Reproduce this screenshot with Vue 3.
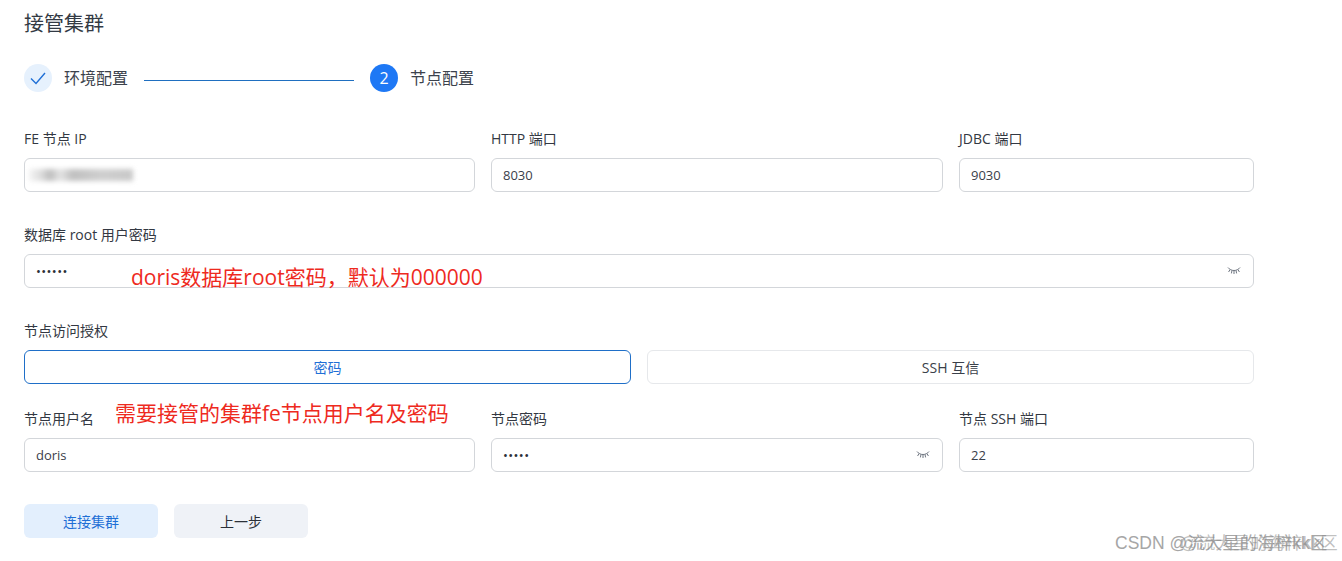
<script setup>
const topFields = [
  { label: 'FE 节点 IP', value: '', blurred: true },
  { label: 'HTTP 端口', value: '8030' },
  { label: 'JDBC 端口', value: '9030' },
];

const nodeFields = [
  { label: '节点用户名', value: 'doris' },
  { label: '节点密码', value: '•••••', secret: true },
  { label: '节点 SSH 端口', value: '22' },
];
</script>

<template>
  <div class="page">
    <h1 class="title">接管集群</h1>

    <div class="steps">
      <div class="step-icon done">
        <svg width="16" height="16" viewBox="0 0 16 16" fill="none">
          <path d="M1 8.5 L6 13.5 L15 3" stroke="#1f6fd6" stroke-width="1.4" />
        </svg>
      </div>
      <span class="step-label">环境配置</span>
      <div class="step-line"></div>
      <div class="step-icon current">2</div>
      <span class="step-label">节点配置</span>
    </div>

    <div class="row three first">
      <div v-for="f in topFields" :key="f.label" class="field">
        <label>{{ f.label }}</label>
        <div class="input">
          <div v-if="f.blurred" class="blur"></div>
          <span v-else>{{ f.value }}</span>
        </div>
      </div>
    </div>

    <div class="field block">
      <label>数据库 root 用户密码</label>
      <div class="input">
        <span class="dots">••••••</span>
        <svg class="eye" width="14" height="9" viewBox="0 0 14 9" fill="none">
          <path d="M1 1.5 C4 5.5 10 5.5 13 1.5 M3 3.6 L1.6 6 M7 4.6 V8 M11 3.6 L12.4 6 M5 4.4 L4.4 7.4 M9 4.4 L9.6 7.4" stroke="#6f7681" stroke-width="1" />
        </svg>
      </div>
    </div>

    <div class="block">
      <label class="auth-label">节点访问授权</label>
      <div class="segment">
        <div class="seg active">密码</div>
        <div class="seg">SSH 互信</div>
      </div>
    </div>

    <div class="row three node">
      <div v-for="f in nodeFields" :key="f.label" class="field">
        <label>{{ f.label }}</label>
        <div class="input">
          <span :class="{ dots: f.secret }">{{ f.value }}</span>
          <svg v-if="f.secret" class="eye" width="14" height="9" viewBox="0 0 14 9" fill="none">
            <path d="M1 1.5 C4 5.5 10 5.5 13 1.5 M3 3.6 L1.6 6 M7 4.6 V8 M11 3.6 L12.4 6 M5 4.4 L4.4 7.4 M9 4.4 L9.6 7.4" stroke="#6f7681" stroke-width="1" />
          </svg>
        </div>
      </div>
    </div>

    <div class="actions">
      <button class="btn primary">连接集群</button>
      <button class="btn">上一步</button>
    </div>

    <!-- annotations pasted on the screenshot -->
    <div class="note note-root">doris数据库root密码，默认为000000</div>
    <div class="note note-node">需要接管的集群fe节点用户名及密码</div>
    <div class="mark">CSDN @流大星的海梓kk区</div>
    <div class="mark ghost">@流大星的海梓kk区</div>
  </div>
</template>

<style>
body {
  margin: 0;
  background: #fff;
}
</style>

<style scoped>
.page {
  position: relative;
  width: 1342px;
  height: 561px;
  overflow: hidden;
  box-sizing: border-box;
  padding: 10px 0 0 24px;
  background: #fff;
  color: #2b3038;
  font-family: "Open Sans", "Noto Sans CJK SC", sans-serif;
  font-size: 14px;
}

.title {
  height: 26px;
  margin: 0;
  font-size: 20px;
  font-weight: 400;
  line-height: 28px;
  color: #333a44;
}

.steps {
  display: flex;
  align-items: center;
  height: 28px;
  margin-top: 28px;
}

.step-icon {
  display: flex;
  align-items: center;
  justify-content: center;
  flex: none;
  width: 28px;
  height: 28px;
  border-radius: 50%;
  font-size: 16px;
}

.done {
  background: #e6f1fd;
}

.current {
  background: #1e78f5;
  color: #fff;
}

.step-label {
  margin: -2px 0 0 12px;
  font-size: 16px;
  color: #3c424c;
}

.step-line {
  width: 210px;
  height: 1px;
  margin: 4px 16px 0;
  background: #1f6fc0;
}

.row.three {
  display: grid;
  grid-template-columns: 451px 452px 295px;
  column-gap: 16px;
  width: 1230px;
}

.first {
  margin-top: 34px;
}

.field label,
.auth-label {
  display: block;
  height: 24px;
  margin-bottom: 8px;
  line-height: 26px;
  font-size: 14px;
  color: #333842;
}

.input {
  position: relative;
  display: flex;
  align-items: center;
  box-sizing: border-box;
  height: 34px;
  padding: 0 11px;
  border: 1px solid #d3d6da;
  border-radius: 6px;
  background: #fff;
  font-size: 13px;
  color: #3a404a;
}

.block {
  width: 1230px;
  margin-top: 30px;
}

.dots {
  font-size: 13px;
  letter-spacing: 0.4px;
  color: #2b3038;
}

.eye {
  position: absolute;
  right: 12px;
  top: 11px;
}

.blur {
  width: 104px;
  height: 12px;
  margin-left: -7px;
  background: linear-gradient(90deg, #f4f4f4, #dcdcdc 12%, #bdbdbd 20%, #e4e4e4 30%, #c0c0c0 42%, #cfcfcf 70%, #c8c8c8 100%);
  filter: blur(2.5px);
}

.segment {
  display: grid;
  grid-template-columns: 1fr 1fr;
  column-gap: 16px;
}

.seg {
  display: flex;
  align-items: center;
  justify-content: center;
  box-sizing: border-box;
  height: 34px;
  border: 1px solid #e6e8eb;
  border-radius: 6px;
  color: #3a404a;
}

.seg.active {
  border-color: #1f6fc8;
  color: #1f6fd6;
}

.node {
  margin-top: 22px;
}

.actions {
  display: flex;
  gap: 16px;
  margin-top: 32px;
}

.btn {
  width: 134px;
  height: 34px;
  border: none;
  border-radius: 6px;
  background: #eff2f7;
  color: #2b3038;
  font: inherit;
}

.btn.primary {
  background: #e3effd;
  color: #1f6fd6;
}

.note {
  position: absolute;
  font-size: 21px;
  line-height: 28px;
  white-space: nowrap;
  color: #ee2a1e;
  font-family: "Open Sans", "Noto Sans CJK SC", sans-serif;
}

.note-root {
  left: 131px;
  top: 263px;
}

.note-node {
  left: 115px;
  top: 399px;
}

.mark {
  position: absolute;
  left: 1115px;
  top: 532px;
  font-size: 17.5px;
  line-height: 22px;
  white-space: nowrap;
  color: #a6a6a6;
  font-family: "Liberation Sans", "Noto Sans CJK SC", sans-serif;
}

.ghost {
  left: 1180px;
  color: rgba(140, 140, 140, 0.55);
}
</style>
